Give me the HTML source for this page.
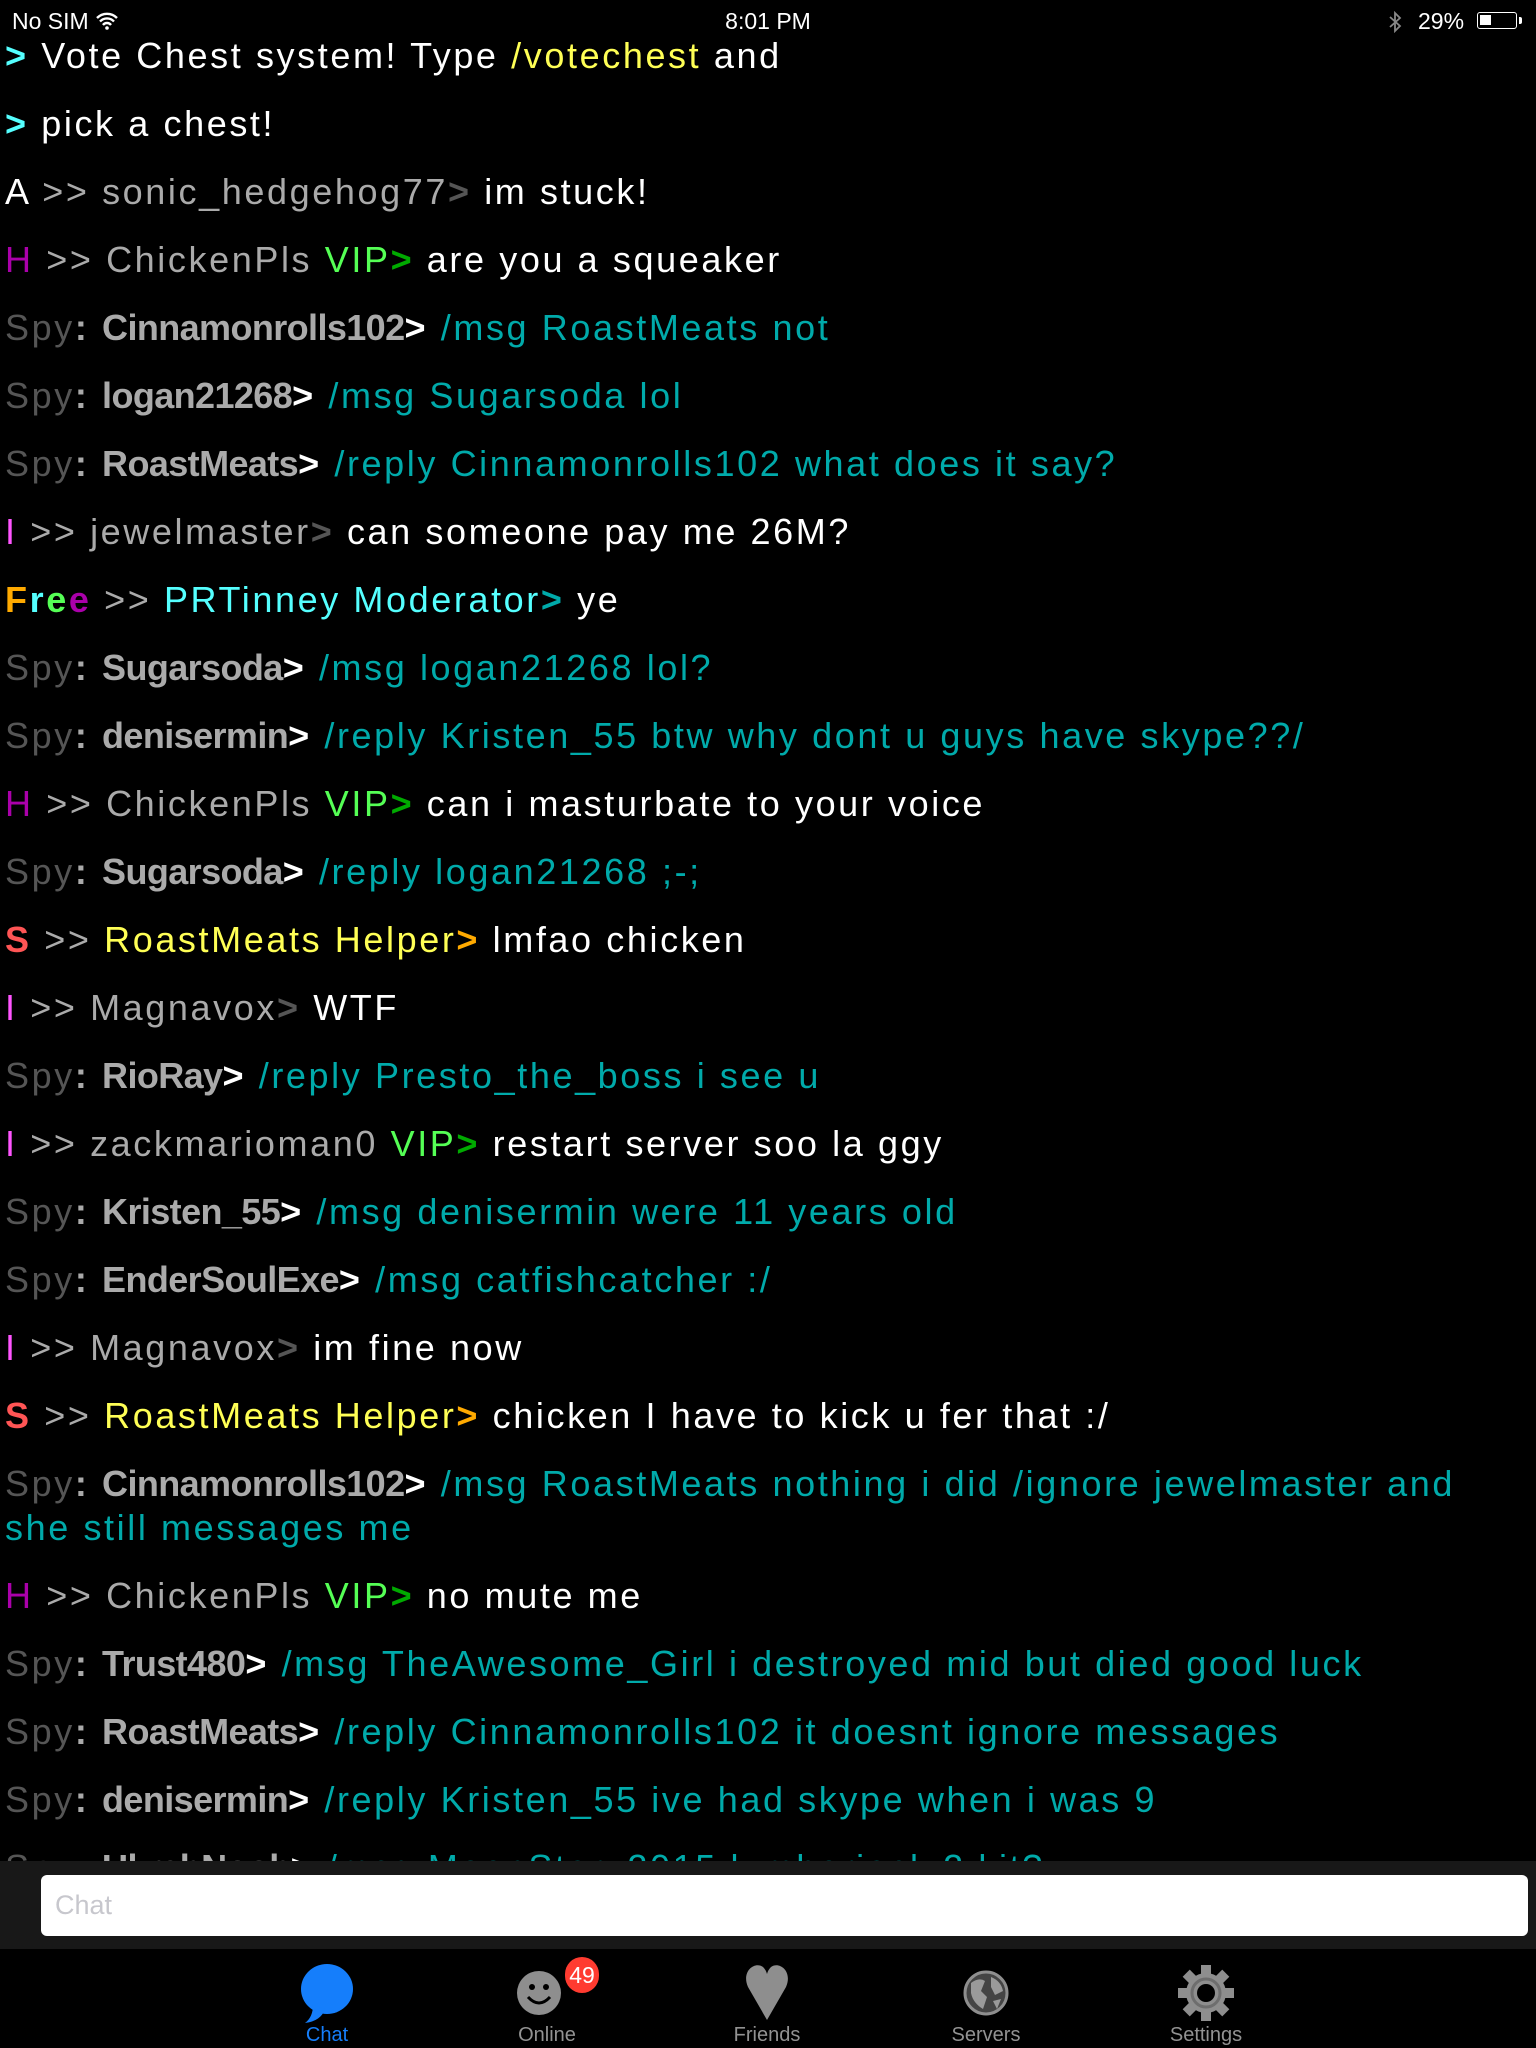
<!DOCTYPE html>
<html><head><meta charset="utf-8"><style>
html,body{margin:0;padding:0;background:#000;width:1536px;height:2048px;overflow:hidden}
body{position:relative;font-family:"Liberation Sans",sans-serif;color:#fff}
.sb{position:absolute;top:6px;font-size:23px;color:#fff;height:30px;line-height:30px}
#chat{position:absolute;left:5px;top:22px;width:1525px;font-size:36px;letter-spacing:2.6px}
.m{line-height:44px;padding:12px 0;white-space:nowrap}
.b{font-weight:bold}
.n{font-weight:bold;font-size:36px;letter-spacing:-0.6px}
.cy{color:#55ffff}.ye{color:#ffff55}.g{color:#aaaaaa}.dg{color:#555}.pu{color:#aa00aa}.gr{color:#55ff55}.dgr{color:#00aa00}.t{color:#00aaaa}.mg{color:#ff55ff}.rd{color:#ff5555}.go{color:#ffaa00}.w{color:#fff}
#bar{position:absolute;left:0;top:1861px;width:1536px;height:88px;background:#181818}
#inp{position:absolute;left:41px;top:14px;width:1487px;height:61px;background:#fff;border-radius:6px;font-size:27px;color:#c7c7cd;line-height:61px;padding-left:14px;box-sizing:border-box}
#tabs{position:absolute;left:0;top:1949px;width:1536px;height:99px;background:#000}
.tab{position:absolute;top:0;width:160px;margin-left:-80px;text-align:center}
.tab svg{position:absolute;left:50%;transform:translateX(-50%);top:14px}
.tab span{position:absolute;left:0;right:0;top:75px;font-size:20px;color:#929292}
</style></head><body>
<div class="sb" style="left:12px">No SIM <svg width="24" height="18" viewBox="0 0 24 18" style="vertical-align:-1px"><path d="M2 6a14 14 0 0 1 20 0M5 9.5a9.5 9.5 0 0 1 14 0M8 13a5 5 0 0 1 8 0" stroke="#fff" stroke-width="2.4" fill="none"/><circle cx="12" cy="16" r="1.8" fill="#fff"/></svg></div>
<div class="sb" style="left:0;width:1536px;text-align:center;font-weight:500">8:01 PM</div>
<div class="sb" style="left:1388px"><svg width="14" height="22" viewBox="0 0 14 22" style="vertical-align:-4px"><path d="M2 6l10 9-5 5V2l5 5-10 9" stroke="#888" stroke-width="1.8" fill="none"/></svg></div>
<div class="sb" style="left:1418px">29%</div>
<div style="position:absolute;left:1477px;top:12px;width:40px;height:17px;border:1.5px solid #fff;border-radius:3px;box-sizing:border-box"><div style="position:absolute;left:2px;top:2px;width:11px;height:10px;background:#fff"></div></div>
<div style="position:absolute;left:1519px;top:17px;width:3px;height:7px;background:#fff;border-radius:0 2px 2px 0"></div>

<div id="chat">
<div class="m"><span class="cy b">&gt;</span> Vote Chest system! Type <span class="ye">/votechest</span> and</div>
<div class="m"><span class="cy b">&gt;</span> pick a chest!</div>
<div class="m">A <span class="g">&gt;&gt; sonic_hedgehog77</span><span class="dg b">&gt;</span> im stuck!</div>
<div class="m"><span class="pu">H</span> <span class="g">&gt;&gt; ChickenPls</span> <span class="gr">VIP</span><span class="dgr b">&gt;</span> are you a squeaker</div>
<div class="m"><span class="dg">Spy</span><span class="g b">:</span> <span class="g n">Cinnamonrolls102</span><span class="b">&gt;</span> <span class="t">/msg RoastMeats not</span></div>
<div class="m"><span class="dg">Spy</span><span class="g b">:</span> <span class="g n">logan21268</span><span class="b">&gt;</span> <span class="t">/msg Sugarsoda lol</span></div>
<div class="m"><span class="dg">Spy</span><span class="g b">:</span> <span class="g n">RoastMeats</span><span class="b">&gt;</span> <span class="t">/reply Cinnamonrolls102 what does it say?</span></div>
<div class="m"><span class="mg">I</span> <span class="g">&gt;&gt; jewelmaster</span><span class="dg b">&gt;</span> can someone pay me 26M?</div>
<div class="m"><span class="b"><span class="go">F</span><span class="cy">r</span><span class="gr">e</span><span class="pu">e</span></span> <span class="g">&gt;&gt;</span> <span class="cy">PRTinney Moderator</span><span class="t b">&gt;</span> ye</div>
<div class="m"><span class="dg">Spy</span><span class="g b">:</span> <span class="g n">Sugarsoda</span><span class="b">&gt;</span> <span class="t">/msg logan21268 lol?</span></div>
<div class="m"><span class="dg">Spy</span><span class="g b">:</span> <span class="g n">denisermin</span><span class="b">&gt;</span> <span class="t">/reply Kristen_55 btw why dont u guys have skype??/</span></div>
<div class="m"><span class="pu">H</span> <span class="g">&gt;&gt; ChickenPls</span> <span class="gr">VIP</span><span class="dgr b">&gt;</span> can i masturbate to your voice</div>
<div class="m"><span class="dg">Spy</span><span class="g b">:</span> <span class="g n">Sugarsoda</span><span class="b">&gt;</span> <span class="t">/reply logan21268 ;-;</span></div>
<div class="m"><span class="rd b">S</span> <span class="g">&gt;&gt;</span> <span class="ye">RoastMeats Helper</span><span class="go b">&gt;</span> lmfao chicken</div>
<div class="m"><span class="mg">I</span> <span class="g">&gt;&gt; Magnavox</span><span class="dg b">&gt;</span> WTF</div>
<div class="m"><span class="dg">Spy</span><span class="g b">:</span> <span class="g n">RioRay</span><span class="b">&gt;</span> <span class="t">/reply Presto_the_boss i see u</span></div>
<div class="m"><span class="mg">I</span> <span class="g">&gt;&gt; zackmarioman0</span> <span class="gr">VIP</span><span class="dgr b">&gt;</span> restart server soo la ggy</div>
<div class="m"><span class="dg">Spy</span><span class="g b">:</span> <span class="g n">Kristen_55</span><span class="b">&gt;</span> <span class="t">/msg denisermin were 11 years old</span></div>
<div class="m"><span class="dg">Spy</span><span class="g b">:</span> <span class="g n">EnderSoulExe</span><span class="b">&gt;</span> <span class="t">/msg catfishcatcher :/</span></div>
<div class="m"><span class="mg">I</span> <span class="g">&gt;&gt; Magnavox</span><span class="dg b">&gt;</span> im fine now</div>
<div class="m"><span class="rd b">S</span> <span class="g">&gt;&gt;</span> <span class="ye">RoastMeats Helper</span><span class="go b">&gt;</span> chicken I have to kick u fer that :/</div>
<div class="m"><span class="dg">Spy</span><span class="g b">:</span> <span class="g n">Cinnamonrolls102</span><span class="b">&gt;</span> <span class="t">/msg RoastMeats nothing i did /ignore jewelmaster and<br>she still messages me</span></div>
<div class="m"><span class="pu">H</span> <span class="g">&gt;&gt; ChickenPls</span> <span class="gr">VIP</span><span class="dgr b">&gt;</span> no mute me</div>
<div class="m"><span class="dg">Spy</span><span class="g b">:</span> <span class="g n">Trust480</span><span class="b">&gt;</span> <span class="t">/msg TheAwesome_Girl i destroyed mid but died good luck</span></div>
<div class="m"><span class="dg">Spy</span><span class="g b">:</span> <span class="g n">RoastMeats</span><span class="b">&gt;</span> <span class="t">/reply Cinnamonrolls102 it doesnt ignore messages</span></div>
<div class="m"><span class="dg">Spy</span><span class="g b">:</span> <span class="g n">denisermin</span><span class="b">&gt;</span> <span class="t">/reply Kristen_55 ive had skype when i was 9</span></div>
<div class="m"><span class="dg">Spy</span><span class="g b">:</span> <span class="g n">UkrahNoob</span><span class="b">&gt;</span> <span class="t">/msg MoonStar_2015 lumberjack 2 kit?</span></div>
</div>

<div id="bar"><div id="inp">Chat</div></div>
<div id="tabs">
 <div class="tab" style="left:327px"><svg width="56" height="62" viewBox="0 0 56 62"><ellipse cx="28" cy="26" rx="26" ry="25" fill="#157efb"/><path d="M14 42 Q14 54 6 60 Q22 58 26 46Z" fill="#157efb"/></svg><span style="color:#157efb">Chat</span></div>
 <div class="tab" style="left:547px"><svg width="48" height="52" viewBox="0 0 48 52" style="margin-left:-6px;top:18px"><circle cx="22" cy="26" r="22" fill="#8e8e8e"/><circle cx="15" cy="20" r="3" fill="#000"/><circle cx="29" cy="20" r="3" fill="#000"/><path d="M11 30 Q22 42 33 30" stroke="#000" stroke-width="3" fill="none"/></svg><div style="position:absolute;left:98px;top:8px;width:34px;height:36px;border-radius:17px;background:#ff3b30;color:#fff;font-size:23px;line-height:36px;text-align:center">49</div><span>Online</span></div>
 <div class="tab" style="left:767px"><svg width="44" height="58" viewBox="0 0 44 58"><path d="M22 57 L3 24 C-4 8 10 -2 18 4 Q21 7 22 11 Q23 7 26 4 C34 -2 48 8 41 24Z" fill="#8e8e8e"/></svg><span>Friends</span></div>
 <div class="tab" style="left:986px"><svg width="46" height="48" viewBox="0 0 46 48" style="top:20px"><circle cx="23" cy="24" r="21" fill="#444" stroke="#8e8e8e" stroke-width="3"/><path d="M8 14 Q16 8 22 12 L18 22 L24 28 L20 40 Q10 34 8 24Z M28 8 Q38 12 40 22 L32 26 L28 18Z M30 32 L38 30 L34 40Z" fill="#9a9a9a"/></svg><span>Servers</span></div>
 <div class="tab" style="left:1206px"><svg width="56" height="56" viewBox="0 0 56 56" style="top:16px"><g fill="#8e8e8e"><circle cx="28" cy="28" r="20"/><g id="t"><rect x="23" y="0" width="10" height="12"/><rect x="23" y="44" width="10" height="12"/></g><use href="#t" transform="rotate(45 28 28)"/><use href="#t" transform="rotate(90 28 28)"/><use href="#t" transform="rotate(135 28 28)"/></g><circle cx="28" cy="28" r="9" fill="#000"/><circle cx="28" cy="28" r="14" fill="none" stroke="#6e6e6e" stroke-width="3"/></svg><span>Settings</span></div>
</div>
</body></html>
